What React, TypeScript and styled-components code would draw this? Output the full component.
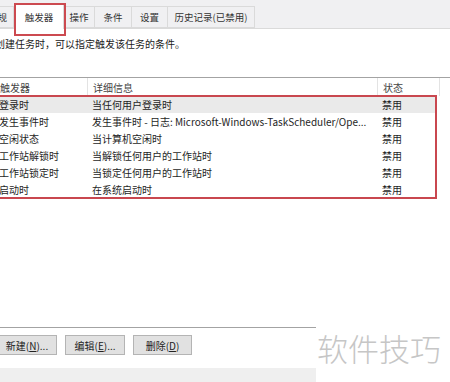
import React from "react";
import styled, { createGlobalStyle } from "styled-components";

const GlobalStyle = createGlobalStyle`
  html, body {
    margin: 0;
    padding: 0;
    width: 450px;
    height: 382px;
    overflow: hidden;
    background: #ffffff;
  }
  body {
    font-family: "Noto Sans CJK SC", "Noto Sans", sans-serif;
    color: #1e1e1e;
  }
`;

const Page = styled.div`
  position: relative;
  width: 450px;
  height: 382px;
  overflow: hidden;
  display: flex;
  flex-direction: column;
`;

const TabBar = styled.div`
  height: 28px;
  background: #f0f0f2;
  border-bottom: 1px solid #dadada;
  display: flex;
  align-items: flex-end;
  margin-left: -18px;
`;

const Tab = styled.div<{ $w: number; $active?: boolean }>`
  position: relative;
  width: ${(p) => p.$w}px;
  height: ${(p) => (p.$active ? 25 : 22)}px;
  margin-bottom: ${(p) => (p.$active ? -1 : 0)}px;
  box-sizing: border-box;
  display: flex;
  align-items: center;
  justify-content: center;
  font-size: 9.5px;
  color: #333;
  background: ${(p) => (p.$active ? "#ffffff" : "#f0f0f2")};
  border: 1px solid #dadada;
  border-bottom: ${(p) => (p.$active ? "none" : "1px solid #dadada")};
  border-left: ${(p) => (p.$active ? "1px solid #dadada" : "none")};
  white-space: nowrap;
  z-index: ${(p) => (p.$active ? 1 : 0)};

  &::after {
    content: "";
    display: ${(p) => (p.$active ? "block" : "none")};
    position: absolute;
    left: -1px;
    right: -3px;
    top: -2px;
    bottom: -7px;
    border: 2px solid #cc4a50;
  }
`;

const Desc = styled.div`
  margin: 8px 0 0 -5px;
  height: 14px;
  line-height: 14px;
  font-size: 10px;
  color: #222;
  white-space: nowrap;
`;

const ListView = styled.div`
  margin: 26px 0 0 -5px;
  width: 460px;
  height: 251px;
  box-sizing: border-box;
  border-top: 1px solid #a3a3a3;
  border-bottom: 1px solid #a3a3a3;
  display: flex;
  flex-direction: column;
`;

const HeaderRow = styled.div`
  height: 18px;
  display: grid;
  grid-template-columns: 93px 290px 62px;
  font-size: 10px;
  color: #444;
`;

const HeaderCell = styled.div`
  display: flex;
  align-items: center;
  padding-left: 5px;
  border-right: 1px solid #e3e3e3;
  white-space: nowrap;
`;

const RowGroup = styled.div`
  width: 441px;
  outline: 2px solid #c9474f;
  outline-offset: -1px;
`;

const Row = styled.div<{ $selected?: boolean }>`
  height: 17px;
  display: grid;
  grid-template-columns: 93px 290px 58px;
  font-size: 10px;
  background: ${(p) => (p.$selected ? "#eaeaea" : "transparent")};
`;

const Cell = styled.div`
  display: flex;
  align-items: center;
  padding-left: 4px;
  white-space: nowrap;
  overflow: hidden;
  color: #1e1e1e;
`;

const ButtonRow = styled.div`
  display: flex;
  gap: 8px;
  margin: 7px 0 0 -3px;
`;

const Button = styled.div<{ $w: number }>`
  width: ${(p) => p.$w}px;
  height: 20px;
  box-sizing: border-box;
  background: #e1e1e1;
  border: 1px solid #b4b4b4;
  display: flex;
  align-items: center;
  justify-content: center;
  font-size: 10px;
  color: #222;
  white-space: nowrap;

  u {
    text-decoration: underline;
  }
`;

const FooterBand = styled.div`
  margin-top: 13px;
  height: 14px;
  background: #efefef;
`;

const Watermark = styled.div`
  position: absolute;
  right: 0;
  bottom: 0;
  width: 134px;
  height: 69px;
  background: #ffffff;
  display: flex;
  align-items: center;
  justify-content: center;
  font-size: 31px;
  font-weight: 300;
  color: #c6c6c6;
  padding-right: 8px;
  box-sizing: border-box;
`;

const tabs = [
  { label: "常规", w: 32 },
  { label: "触发器", w: 50, active: true },
  { label: "操作", w: 31 },
  { label: "条件", w: 37 },
  { label: "设置", w: 36 },
  { label: "历史记录(已禁用)", w: 87 },
];

const rows = [
  ["登录时", "当任何用户登录时", "禁用"],
  ["发生事件时", "发生事件时 - 日志: Microsoft-Windows-TaskScheduler/Ope...", "禁用"],
  ["空闲状态", "当计算机空闲时", "禁用"],
  ["工作站解锁时", "当解锁任何用户的工作站时", "禁用"],
  ["工作站锁定时", "当锁定任何用户的工作站时", "禁用"],
  ["启动时", "在系统启动时", "禁用"],
];

export default function App() {
  return (
    <>
      <GlobalStyle />
      <Page>
        <TabBar>
          {tabs.map((t) => (
            <Tab key={t.label} $w={t.w} $active={t.active}>
              {t.label}
            </Tab>
          ))}
        </TabBar>
        <Desc>创建任务时，可以指定触发该任务的条件。</Desc>
        <ListView>
          <HeaderRow>
            <HeaderCell>触发器</HeaderCell>
            <HeaderCell>详细信息</HeaderCell>
            <HeaderCell>状态</HeaderCell>
          </HeaderRow>
          <RowGroup>
            {rows.map((r, i) => (
              <Row key={r[0]} $selected={i === 0}>
                <Cell>{r[0]}</Cell>
                <Cell>{r[1]}</Cell>
                <Cell>{r[2]}</Cell>
              </Row>
            ))}
          </RowGroup>
        </ListView>
        <ButtonRow>
          <Button $w={60}>新建(<u>N</u>)...</Button>
          <Button $w={60}>编辑(<u>E</u>)...</Button>
          <Button $w={59}>删除(<u>D</u>)</Button>
        </ButtonRow>
        <FooterBand />
        <Watermark>软件技巧</Watermark>
      </Page>
    </>
  );
}
